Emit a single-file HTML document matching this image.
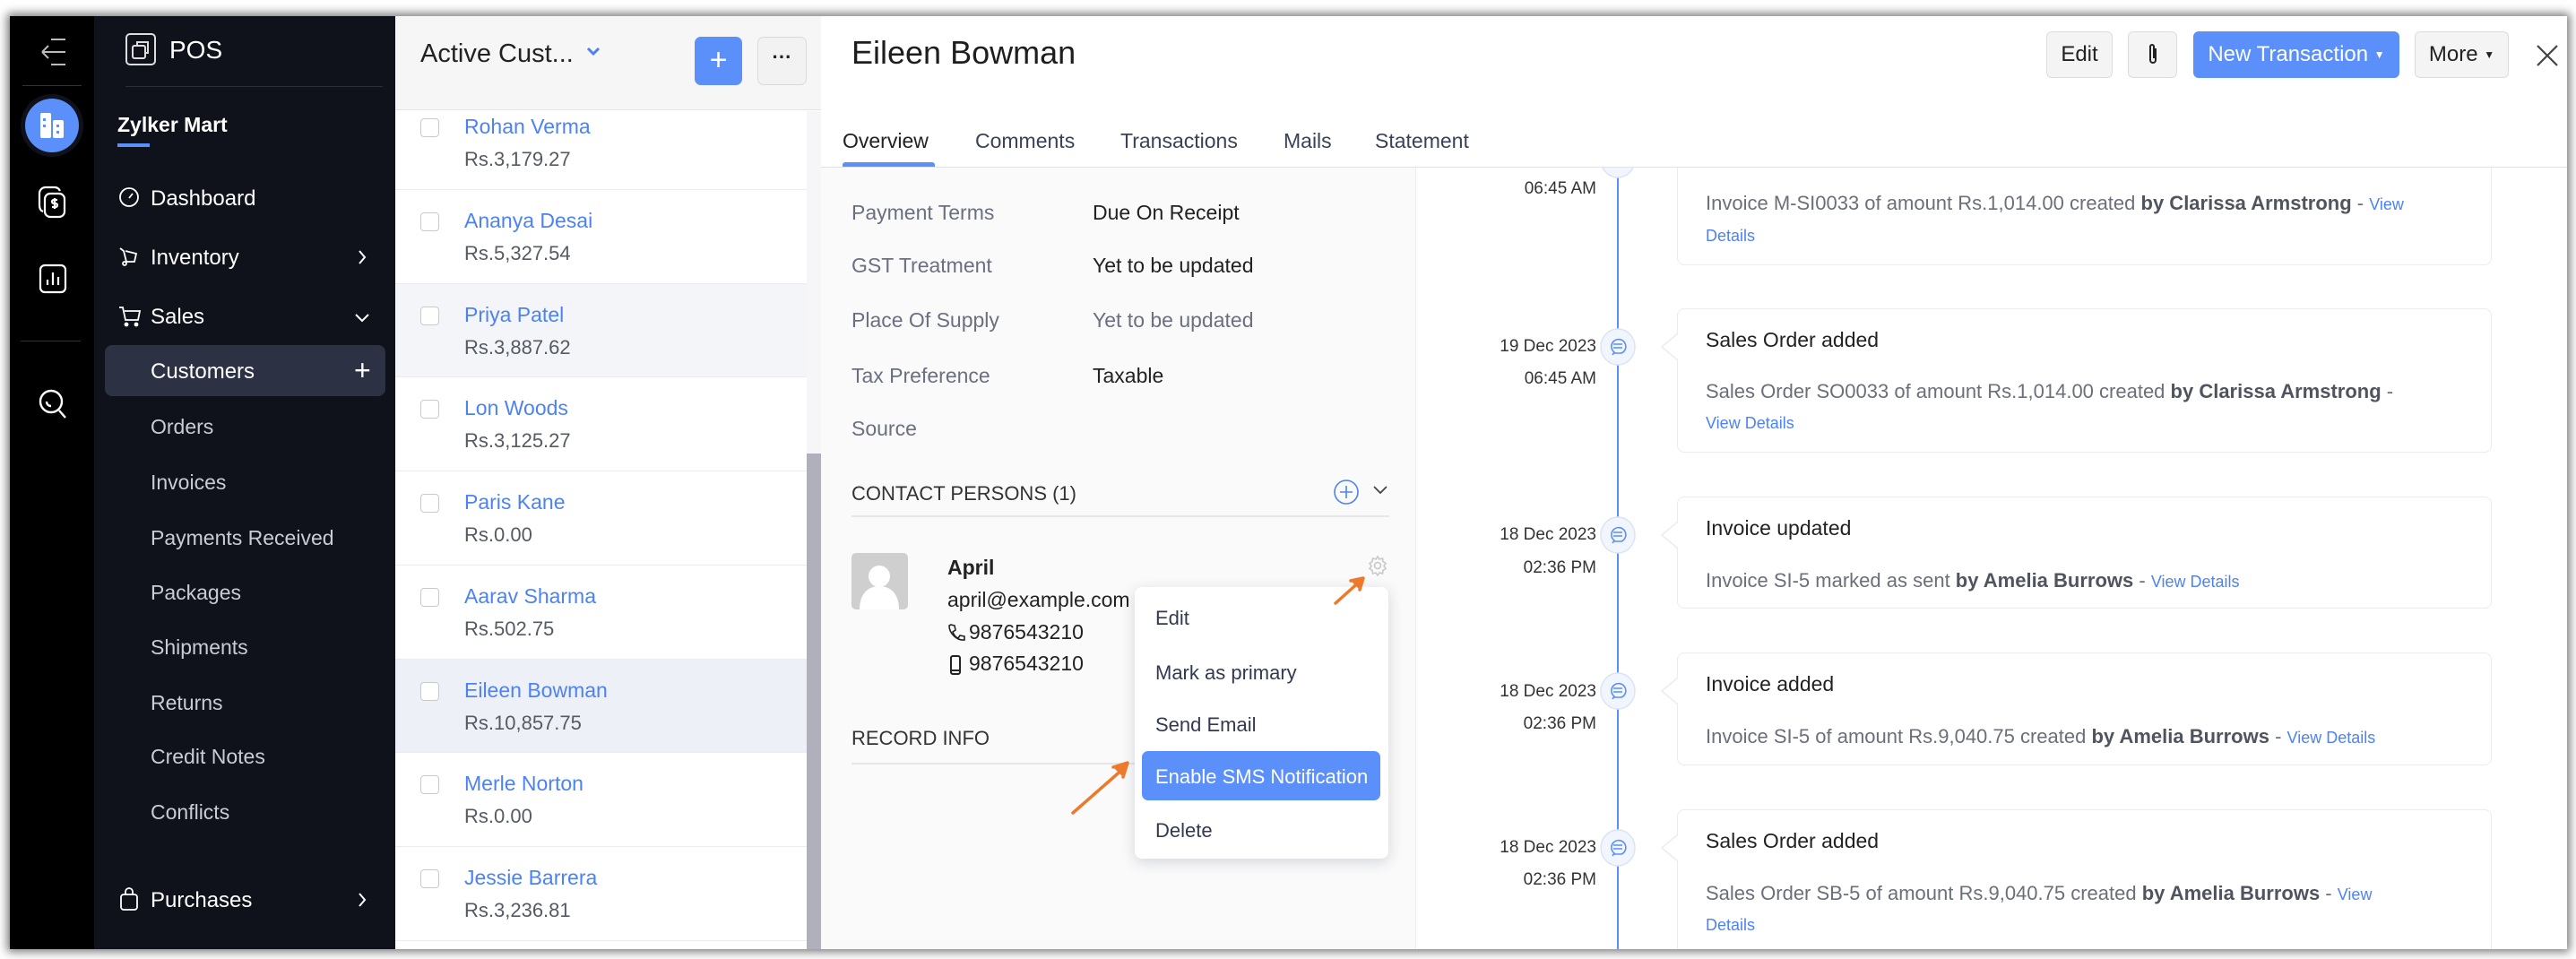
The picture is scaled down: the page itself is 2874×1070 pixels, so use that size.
<!DOCTYPE html>
<html><head><meta charset="utf-8"><style>
*{box-sizing:border-box;margin:0;padding:0}
html,body{width:2874px;height:1070px;overflow:hidden}
body{background:#fff;position:relative;font-family:"Liberation Sans",sans-serif;}
.a{position:absolute;white-space:nowrap}
#frame{position:absolute;left:11px;top:18px;width:2853px;height:1041px;box-shadow:0 0 10px 3px #777;overflow:hidden;background:#fff}
.side{color:#fff;font-size:24px}
.sub{color:#c9ccd4;font-size:23px}
.nm{color:#4d82f2;font-size:23px}
.amt{color:#555a63;font-size:22px}
.cb{position:absolute;width:21px;height:21px;border:1.5px solid #c8cad0;border-radius:4px;background:#fff}
.lbl{color:#6b7080;font-size:23px}
.val{color:#222;font-size:23px}
.dt{color:#333;font-size:19px;text-align:right;width:200px}
.card{position:absolute;left:1860px;width:909px;border:1.5px solid #ececf0;border-radius:8px;background:#fff}
.tt{color:#222;font-size:23px}
.ds{color:#6b6f7a;font-size:22px}
.ds b{color:#50545e}
.vd{color:#4d82f2;font-size:18px}
.btn{position:absolute;border:1.5px solid #dcdcdc;border-radius:6px;background:#f4f4f4;top:17px;height:52px;font-size:24px;color:#222;text-align:center;line-height:50px}
.mi{position:absolute;left:1278px;font-size:22px;color:#333950}
</style></head><body>
<div id="frame">
<!-- rail -->
<div class="a" style="left:0;top:0;width:94px;height:1041px;background:#000"></div>
<div class="a" style="left:94px;top:0;width:336px;height:1041px;background:#0f121b"></div>
<div class="a" style="left:14px;top:77px;width:66px;height:1px;background:#333"></div>
<svg class="a" style="left:32px;top:22px" width="36" height="36" viewBox="0 0 36 36" fill="none" stroke="#bbb" stroke-width="2"><path d="M14 4h16M4 18h26M4 18l7-7M4 18l7 7M14 32h16"/></svg>
<div class="a" style="left:12px;top:87px;width:70px;height:70px;border-radius:50%;background:#0f121b"></div>
<div class="a" style="left:17px;top:92px;width:60px;height:60px;border-radius:50%;background:#5b8ff9"></div>
<svg class="a" style="left:32px;top:106px" width="30" height="32" viewBox="0 0 30 32" fill="#fff"><rect x="2" y="2" width="12" height="28" rx="2"/><rect x="16" y="10" width="12" height="20" rx="2"/><rect x="5" y="8" width="3" height="3" fill="#5b8ff9"/><rect x="5" y="15" width="3" height="3" fill="#5b8ff9"/><rect x="20" y="15" width="3" height="3" fill="#5b8ff9"/><rect x="20" y="22" width="3" height="3" fill="#5b8ff9"/></svg>
<svg class="a" style="left:30px;top:188px" width="36" height="40" viewBox="0 0 36 40" fill="none" stroke="#fff" stroke-width="2.2"><rect x="9" y="10" width="22" height="26" rx="6"/><path d="M7 30c-3-1-4-4-4-7V10c0-4 3-7 7-7h10c3 0 5 2 6 4"/><path d="M23 17h-4a2 2 0 000 4h2a2 2 0 010 4h-4M20 15v12"/></svg>
<svg class="a" style="left:30px;top:275px" width="36" height="36" viewBox="0 0 36 36" fill="none" stroke="#fff" stroke-width="2.2"><rect x="4" y="3" width="28" height="30" rx="5"/><path d="M12 25v-6M18 25V11M24 25v-9"/></svg>
<div class="a" style="left:12px;top:362px;width:67px;height:1px;background:#333"></div>
<svg class="a" style="left:30px;top:414px" width="36" height="38" viewBox="0 0 36 38" fill="none" stroke="#fff" stroke-width="2.4"><circle cx="16" cy="16" r="12"/><path d="M25 26l7 8M11 16c0 3 2 5 5 5"/></svg>
<!-- sidebar -->
<svg class="a" style="left:128px;top:18px" width="36" height="38" viewBox="0 0 36 38" fill="none" stroke="#ddd" stroke-width="2"><rect x="2" y="2" width="32" height="34" rx="4"/><rect x="9" y="15" width="14" height="14" rx="2"/><path d="M14 15v-4h12v12h-3"/></svg>
<div class="a side" style="left:178px;top:22px;font-size:28px">POS</div>
<div class="a" style="left:129px;top:78px;width:287px;height:1px;background:#2a2e38"></div>
<div class="a side" style="left:120px;top:108px;font-weight:bold;font-size:23px">Zylker Mart</div>
<div class="a" style="left:120px;top:142px;width:36px;height:4px;background:#5b8ff9"></div>
<svg class="a" style="left:121px;top:190px" width="24" height="24" viewBox="0 0 24 24" fill="none" stroke="#fff" stroke-width="1.8"><circle cx="12" cy="12" r="10"/><path d="M12 13l4-5"/></svg>
<div class="a side" style="left:157px;top:190px">Dashboard</div>
<svg class="a" style="left:121px;top:256px" width="24" height="24" viewBox="0 0 24 24" fill="none" stroke="#fff" stroke-width="1.8"><path d="M2 3l4 3 3 12M8 6l12 3-2 9-9 0"/><circle cx="7" cy="20" r="2"/></svg>
<div class="a side" style="left:157px;top:256px">Inventory</div>
<svg class="a" style="left:386px;top:259px" width="14" height="20" viewBox="0 0 14 20" fill="none" stroke="#fff" stroke-width="2"><path d="M4 3l6 7-6 7"/></svg>
<svg class="a" style="left:121px;top:322px" width="26" height="26" viewBox="0 0 26 26" fill="none" stroke="#fff" stroke-width="1.8"><path d="M1 3h4l3 14h14l2-10H7"/><circle cx="9" cy="22" r="1.5" fill="#fff"/><circle cx="20" cy="22" r="1.5" fill="#fff"/></svg>
<div class="a side" style="left:157px;top:322px">Sales</div>
<svg class="a" style="left:383px;top:330px" width="20" height="14" viewBox="0 0 20 14" fill="none" stroke="#fff" stroke-width="2"><path d="M3 3l7 7 7-7"/></svg>
<div class="a" style="left:106px;top:367px;width:313px;height:57px;border-radius:8px;background:#2c3143"></div>
<div class="a side" style="left:157px;top:383px">Customers</div>
<div class="a" style="left:384px;top:383px;color:#fff;font-size:32px;line-height:24px">+</div>
<div class="a sub" style="left:157px;top:445px">Orders</div>
<div class="a sub" style="left:157px;top:507px">Invoices</div>
<div class="a sub" style="left:157px;top:569px">Payments Received</div>
<div class="a sub" style="left:157px;top:630px">Packages</div>
<div class="a sub" style="left:157px;top:691px">Shipments</div>
<div class="a sub" style="left:157px;top:753px">Returns</div>
<div class="a sub" style="left:157px;top:813px">Credit Notes</div>
<div class="a sub" style="left:157px;top:875px">Conflicts</div>
<svg class="a" style="left:122px;top:971px" width="22" height="28" viewBox="0 0 22 28" fill="none" stroke="#fff" stroke-width="1.8"><rect x="2" y="9" width="18" height="17" rx="3"/><path d="M7 9V6a4 4 0 018 0v3"/></svg>
<div class="a side" style="left:157px;top:973px">Purchases</div>
<svg class="a" style="left:386px;top:976px" width="14" height="20" viewBox="0 0 14 20" fill="none" stroke="#fff" stroke-width="2"><path d="M4 3l6 7-6 7"/></svg>
<!-- list -->
<div class="a" style="left:430px;top:298px;width:459px;height:104px;background:#f4f5f9"></div>
<div class="a" style="left:430px;top:717px;width:459px;height:104px;background:#eef0f7"></div>
<div class="a" style="left:430px;top:193px;width:459px;height:1px;background:#ececf0"></div>
<div class="a" style="left:430px;top:298px;width:459px;height:1px;background:#ececf0"></div>
<div class="a" style="left:430px;top:402px;width:459px;height:1px;background:#ececf0"></div>
<div class="a" style="left:430px;top:507px;width:459px;height:1px;background:#ececf0"></div>
<div class="a" style="left:430px;top:612px;width:459px;height:1px;background:#ececf0"></div>
<div class="a" style="left:430px;top:717px;width:459px;height:1px;background:#ececf0"></div>
<div class="a" style="left:430px;top:821px;width:459px;height:1px;background:#ececf0"></div>
<div class="a" style="left:430px;top:926px;width:459px;height:1px;background:#ececf0"></div>
<div class="a" style="left:430px;top:1031px;width:459px;height:1px;background:#ececf0"></div>
<div class="cb" style="left:458px;top:114px"></div><div class="a nm" style="left:507px;top:110px">Rohan Verma</div><div class="a amt" style="left:507px;top:147px">Rs.3,179.27</div>
<div class="cb" style="left:458px;top:219px"></div><div class="a nm" style="left:507px;top:215px">Ananya Desai</div><div class="a amt" style="left:507px;top:252px">Rs.5,327.54</div>
<div class="cb" style="left:458px;top:324px"></div><div class="a nm" style="left:507px;top:320px">Priya Patel</div><div class="a amt" style="left:507px;top:357px">Rs.3,887.62</div>
<div class="cb" style="left:458px;top:428px"></div><div class="a nm" style="left:507px;top:424px">Lon Woods</div><div class="a amt" style="left:507px;top:461px">Rs.3,125.27</div>
<div class="cb" style="left:458px;top:533px"></div><div class="a nm" style="left:507px;top:529px">Paris Kane</div><div class="a amt" style="left:507px;top:566px">Rs.0.00</div>
<div class="cb" style="left:458px;top:638px"></div><div class="a nm" style="left:507px;top:634px">Aarav Sharma</div><div class="a amt" style="left:507px;top:671px">Rs.502.75</div>
<div class="cb" style="left:458px;top:743px"></div><div class="a nm" style="left:507px;top:739px">Eileen Bowman</div><div class="a amt" style="left:507px;top:776px">Rs.10,857.75</div>
<div class="cb" style="left:458px;top:847px"></div><div class="a nm" style="left:507px;top:843px">Merle Norton</div><div class="a amt" style="left:507px;top:880px">Rs.0.00</div>
<div class="cb" style="left:458px;top:952px"></div><div class="a nm" style="left:507px;top:948px">Jessie Barrera</div><div class="a amt" style="left:507px;top:985px">Rs.3,236.81</div>
<div class="a" style="left:430px;top:0;width:475px;height:105px;background:#f6f6f7;border-bottom:1px solid #e4e4e8"></div>
<div class="a" style="left:458px;top:26px;font-size:29px;color:#222">Active Cust...</div>
<svg class="a" style="left:643px;top:34px" width="16" height="12" viewBox="0 0 16 12" fill="none" stroke="#4d82f2" stroke-width="3"><path d="M2 2l6 6 6-6"/></svg>
<div class="a" style="left:764px;top:23px;width:53px;height:54px;border-radius:7px;background:#5b8ff9;color:#fff;font-size:34px;text-align:center;line-height:52px">+</div>
<div class="a" style="left:834px;top:23px;width:55px;height:54px;border-radius:7px;background:#f2f2f3;border:1.5px solid #dadada;color:#222;font-size:22px;font-weight:bold;text-align:center;line-height:44px">···</div>
<div class="a" style="left:889px;top:106px;width:16px;height:935px;background:#f6f6f8"></div>
<div class="a" style="left:889px;top:488px;width:16px;height:553px;background:#b0b0bc"></div>
<!-- left pane -->
<div class="a" style="left:905px;top:169px;width:664px;height:872px;background:#fafafa;border-right:1px solid #ececf0"></div>
<div class="a lbl" style="left:939px;top:206px">Payment Terms</div><div class="a val" style="left:1208px;top:206px">Due On Receipt</div>
<div class="a lbl" style="left:939px;top:265px">GST Treatment</div><div class="a val" style="left:1208px;top:265px">Yet to be updated</div>
<div class="a lbl" style="left:939px;top:326px">Place Of Supply</div><div class="a lbl" style="left:1208px;top:326px">Yet to be updated</div>
<div class="a lbl" style="left:939px;top:388px">Tax Preference</div><div class="a val" style="left:1208px;top:388px">Taxable</div>
<div class="a lbl" style="left:939px;top:447px">Source</div>
<div class="a val" style="left:939px;top:520px;font-size:22px;color:#333">CONTACT PERSONS (1)</div>
<svg class="a" style="left:1476px;top:516px" width="30" height="30" viewBox="0 0 30 30" fill="none" stroke="#4d82f2" stroke-width="1.6"><circle cx="15" cy="15" r="13"/><path d="M15 8v14M8 15h14"/></svg>
<svg class="a" style="left:1519px;top:522px" width="20" height="14" viewBox="0 0 20 14" fill="none" stroke="#444" stroke-width="1.8"><path d="M3 3l7 7 7-7"/></svg>
<div class="a" style="left:939px;top:557px;width:600px;height:1.5px;background:#e6e6ea"></div>
<div class="a" style="left:939px;top:599px;width:63px;height:63px;border-radius:5px;background:#cfcfcf;overflow:hidden"><svg width="63" height="63" viewBox="0 0 63 63" fill="#fff"><circle cx="31" cy="26" r="12"/><path d="M9 63c0-18 10-26 22-26s22 8 22 26z"/></svg></div>
<div class="a" style="left:1046px;top:602px;font-size:23px;font-weight:bold;color:#222">April</div>
<div class="a val" style="left:1046px;top:638px">april@example.com</div>
<svg class="a" style="left:1046px;top:677px" width="20" height="22" viewBox="0 0 20 22" fill="none" stroke="#222" stroke-width="1.6"><path d="M4 2l4 1 1 5-3 2c1 3 3 6 6 7l2-3 5 1v4c-8 1-17-7-17-16z"/></svg>
<div class="a val" style="left:1070px;top:674px">9876543210</div>
<svg class="a" style="left:1048px;top:712px" width="14" height="24" viewBox="0 0 14 24" fill="none" stroke="#222" stroke-width="2"><rect x="2" y="2" width="10" height="20" rx="2"/><path d="M2 18h10"/></svg>
<div class="a val" style="left:1070px;top:709px">9876543210</div>
<svg class="a" style="left:1514px;top:601px" width="24" height="24" viewBox="0 0 24 24" fill="none" stroke="#c8c8c8" stroke-width="1.6"><circle cx="12" cy="12" r="3.5"/><path d="M12 2l2 3 3.5-1 .5 3.5 3 2-2 3 2 3-3 2-.5 3.5-3.5-1-2 3-2-3-3.5 1-.5-3.5-3-2 2-3-2-3 3-2 .5-3.5 3.5 1z"/></svg>
<div class="a val" style="left:939px;top:793px;font-size:22px;color:#333">RECORD INFO</div>
<div class="a" style="left:939px;top:833px;width:320px;height:1.5px;background:#e6e6ea"></div>
<!-- dropdown -->
<div class="a" style="left:1255px;top:637px;width:283px;height:303px;background:#fff;border-radius:8px;box-shadow:0 4px 16px rgba(40,50,90,.18)"></div>
<div class="mi" style="top:659px">Edit</div>
<div class="mi" style="top:720px">Mark as primary</div>
<div class="mi" style="top:778px">Send Email</div>
<div class="a" style="left:1263px;top:820px;width:266px;height:55px;border-radius:7px;background:#5b8ff9"></div>
<div class="mi" style="top:836px;color:#fff">Enable SMS Notification</div>
<div class="mi" style="top:896px">Delete</div>
<!-- arrows -->
<svg class="a" style="left:1150px;top:600px" width="400" height="300" viewBox="1150 600 400 300" fill="none" stroke="#ec7a2a" stroke-width="3.5" stroke-linecap="round"><path d="M1479 655l29-26"/><path d="M1496 630l14-3-4 13" fill="#ec7a2a" stroke-linejoin="round"/><path d="M1186 889l57-50"/><path d="M1231 838l16-5-5 16" fill="#ec7a2a" stroke-linejoin="round"/></svg>
<!-- timeline -->
<div class="a" style="left:1793px;top:150px;width:1.5px;height:891px;background:#5b8ff9"></div>
<div class="a dt" style="left:1570px;top:182px">06:45 AM</div>
<div class="card" style="top:120px;height:158px"></div>
<div class="a ds" style="left:1892px;top:196px">Invoice M-SI0033 of amount Rs.1,014.00 created <b>by Clarissa Armstrong</b> - <span class="vd">View</span></div>
<div class="a vd" style="left:1892px;top:235px">Details</div>
<div class="a dt" style="left:1570px;top:358px">19 Dec 2023</div>
<div class="a dt" style="left:1570px;top:394px">06:45 AM</div>
<div class="card" style="top:326px;height:161px"></div>
<div class="a tt" style="left:1892px;top:348px">Sales Order added</div>
<div class="a ds" style="left:1892px;top:406px">Sales Order SO0033 of amount Rs.1,014.00 created <b>by Clarissa Armstrong</b> -</div>
<div class="a vd" style="left:1892px;top:444px">View Details</div>
<div class="a dt" style="left:1570px;top:568px">18 Dec 2023</div>
<div class="a dt" style="left:1570px;top:605px">02:36 PM</div>
<div class="card" style="top:536px;height:125px"></div>
<div class="a tt" style="left:1892px;top:558px">Invoice updated</div>
<div class="a ds" style="left:1892px;top:617px">Invoice SI-5 marked as sent <b>by Amelia Burrows</b> - <span class="vd">View Details</span></div>
<div class="a dt" style="left:1570px;top:743px">18 Dec 2023</div>
<div class="a dt" style="left:1570px;top:779px">02:36 PM</div>
<div class="card" style="top:710px;height:126px"></div>
<div class="a tt" style="left:1892px;top:732px">Invoice added</div>
<div class="a ds" style="left:1892px;top:791px">Invoice SI-5 of amount Rs.9,040.75 created <b>by Amelia Burrows</b> - <span class="vd">View Details</span></div>
<div class="a dt" style="left:1570px;top:917px">18 Dec 2023</div>
<div class="a dt" style="left:1570px;top:953px">02:36 PM</div>
<div class="card" style="top:885px;height:170px"></div>
<div class="a tt" style="left:1892px;top:907px">Sales Order added</div>
<div class="a ds" style="left:1892px;top:966px">Sales Order SB-5 of amount Rs.9,040.75 created <b>by Amelia Burrows</b> - <span class="vd">View</span></div>
<div class="a vd" style="left:1892px;top:1004px">Details</div>
<svg class="a" style="left:1770px;top:0" width="100" height="1041" viewBox="1770 0 100 1041">
<g fill="#fff" stroke="#ececf0" stroke-width="1.5"><path d="M1861 354l-18 15 18 15"/><path d="M1861 564l-18 15 18 15"/><path d="M1861 738l-18 15 18 15"/><path d="M1861 913l-18 15 18 15"/></g>
<g fill="#f1f5fd" stroke="#dbe4f4" stroke-width="1.5"><ellipse cx="1794" cy="160" rx="19" ry="20"/><ellipse cx="1794" cy="369" rx="19" ry="20"/><ellipse cx="1794" cy="579" rx="19" ry="20"/><ellipse cx="1794" cy="753" rx="19" ry="20"/><ellipse cx="1794" cy="928" rx="19" ry="20"/></g>
<g fill="none" stroke="#5b8ff9" stroke-width="1.6"><g id="ic"><path d="M1788 378l2-3a8 8 0 118 1h-8"/><path d="M1789 366h10M1789 370h10"/></g>
<use href="#ic" y="210"/><use href="#ic" y="384"/><use href="#ic" y="559"/></g>
</svg>
<!-- detail header (covers scrolled content) -->
<div class="a" style="left:905px;top:0;width:1948px;height:169px;background:#fff;border-bottom:1.5px solid #e2e2e6"></div>
<div class="a" style="left:939px;top:20px;font-size:36px;color:#1e1e1e">Eileen Bowman</div>
<div class="btn" style="left:2272px;width:74px">Edit</div>
<div class="btn" style="left:2363px;width:55px"><svg width="16" height="28" viewBox="0 0 16 28" fill="none" stroke="#222" stroke-width="2" style="margin-top:11px"><path d="M11 7v13a3 3 0 01-6 0V5a2 2 0 014 0v13"/></svg></div>
<div class="btn" style="left:2436px;width:230px;background:#5b8ff9;border-color:#5b8ff9;color:#fff">New Transaction <span style="font-size:12px;vertical-align:3px">▼</span></div>
<div class="btn" style="left:2683px;width:105px">More <span style="font-size:12px;vertical-align:3px">▼</span></div>
<svg class="a" style="left:2817px;top:30px" width="28" height="28" viewBox="0 0 28 28" stroke="#444" stroke-width="2.2"><path d="M3 3l22 22M25 3L3 25"/></svg>
<div class="a" style="left:929px;top:126px;font-size:23px;color:#222">Overview</div>
<div class="a" style="left:1077px;top:126px;font-size:23px;color:#3b4258">Comments</div>
<div class="a" style="left:1239px;top:126px;font-size:23px;color:#3b4258">Transactions</div>
<div class="a" style="left:1421px;top:126px;font-size:23px;color:#3b4258">Mails</div>
<div class="a" style="left:1523px;top:126px;font-size:23px;color:#3b4258">Statement</div>
<div class="a" style="left:929px;top:163px;width:103px;height:5px;border-radius:3px 3px 0 0;background:#5b8ff9"></div>
</div>
</body></html>
